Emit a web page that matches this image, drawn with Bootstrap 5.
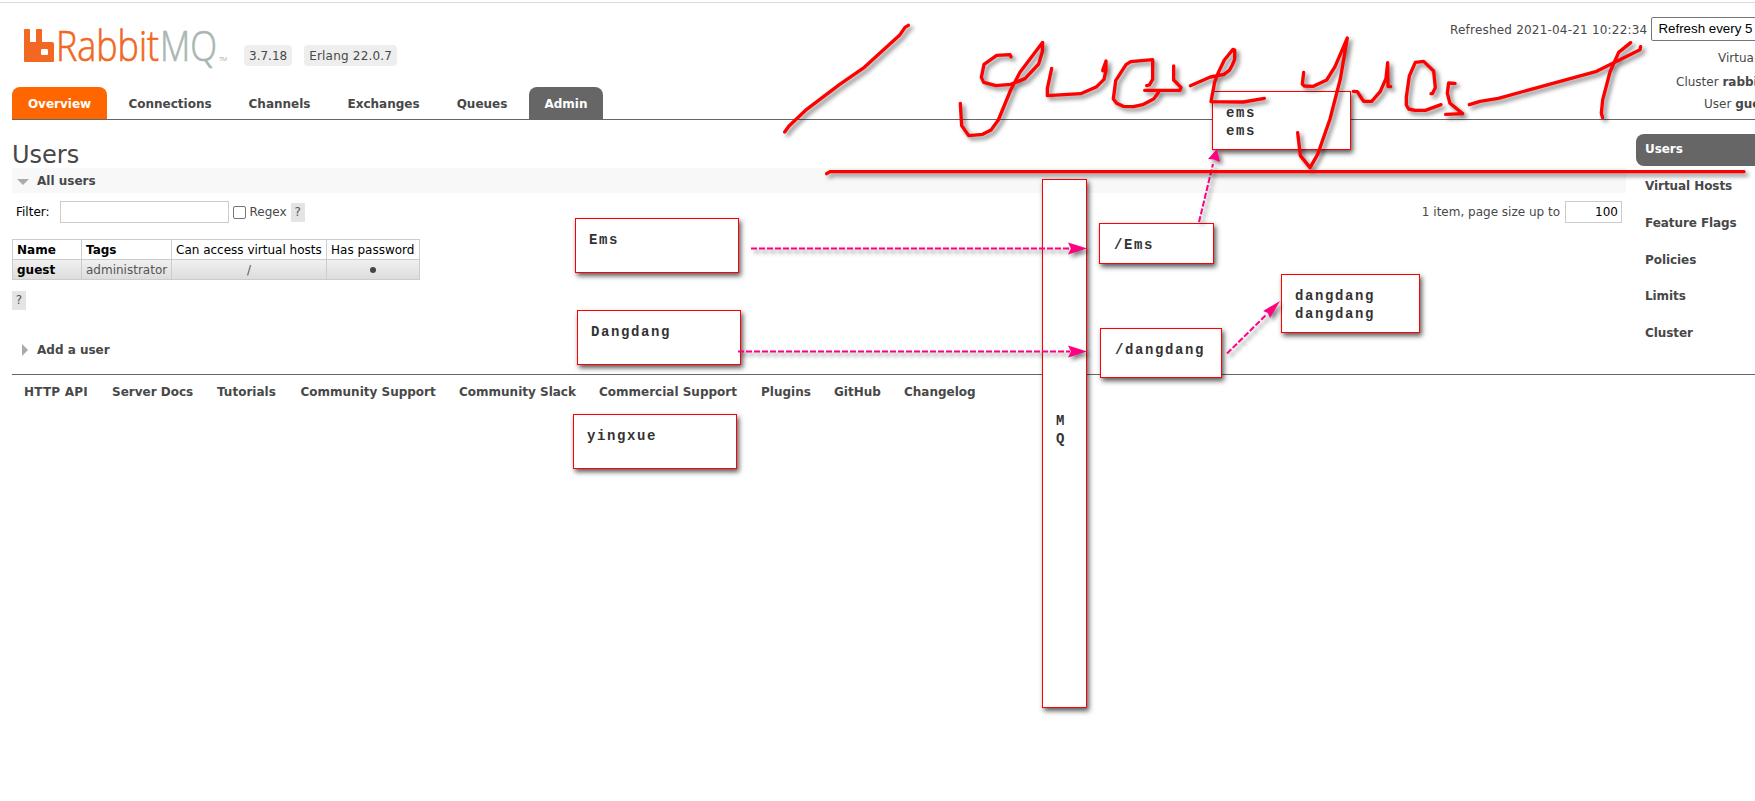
<!DOCTYPE html>
<html lang="en">
<head>
<meta charset="utf-8">
<title>RabbitMQ Management</title>
<link rel="stylesheet" href="https://cdn.jsdelivr.net/npm/bootstrap@5.3.0/dist/css/bootstrap.min.css">
<style>
body{font:12px/17px "DejaVu Sans",Verdana,sans-serif;color:#484848;background:#fff;height:801px;overflow:hidden;position:relative}
b,.fw-bold,th{font-weight:700}
.topline{height:1px;margin-top:2px;background:#dadada}
.masthead{height:84px;padding-left:24px}
.logo{margin-top:22px;width:206px;height:42px;overflow:visible}
.ver{background:#eee;border-radius:4px;height:21px;line-height:22px;margin-top:42px;padding:0 5px;white-space:nowrap}
.ver+.ver{letter-spacing:.2px}
.status{margin-left:auto;width:305px;height:84px;white-space:nowrap}
.refresh{margin-top:13px;height:26px}
.refresh>span:first-child{letter-spacing:.2px;padding-top:2px}
.picker{border:1px solid #767676;border-radius:2px;width:180px;height:24px;font:13.33px/22px "Liberation Sans",sans-serif;color:#000;padding-left:6px;margin-left:4px;flex:none}
.tabs{height:33px;margin-left:12px;border-bottom:1px solid #666}
.tabs a{height:32px;line-height:34px;color:#444;font-weight:700;border-radius:8px 8px 0 0;text-decoration:none;text-align:center}
.tabs a.hot{background:#f60;color:#fff}.tabs a.sel{background:#666;color:#fff}
.mainpane{width:1614px;margin-left:12px;height:254px}
h1{font-size:24px;line-height:30px;font-weight:400;margin:20px 0 0;height:28px;color:#484848}
.sect{height:25px;line-height:23px;font-weight:700;padding:2px 0 0 5px}
.sect svg{width:12px;height:12px;margin-right:8px;flex:none}
.sect.open{background:#f8f8f8}
.inp{border:1px solid #ccc;height:22px;display:block;color:#000}
.chk{width:13px;height:13px;border:1px solid #767676;border-radius:2px}
.help{background:#e4e4e4;width:14px;height:19px;line-height:19px;text-align:center;color:#555}
.utable{border-collapse:collapse;margin-top:16px;width:407px;table-layout:fixed}
.utable td,.utable th{border:1px solid #ccc;padding:0 4px;height:20px;line-height:18px;white-space:nowrap;color:#000}
.utable tbody tr{background:linear-gradient(#f0f0f0,#dcdcdc)}
.utable tbody td{color:#555}.utable tbody td.nm{color:#000}
.utable .dot{width:6px;height:6px;border-radius:50%;background:#444;display:inline-block;vertical-align:1px}
.side{width:119px;margin-left:10px;padding-top:14px}
.side a{display:block;height:36.8px;line-height:30px;padding-left:9px;font-weight:700;color:#444;text-decoration:none;letter-spacing:-.07px}
.side a.sel{background:#666;color:#fff;border-radius:8px 0 0 8px;height:32px;line-height:31px;margin-bottom:5px}
.foot{margin-left:12px;border-top:1px solid #666;padding:9px 0 0 12px}
.foot a{color:#444;font-weight:700;text-decoration:none;white-space:nowrap;flex:none}
.note{position:absolute;background:#fff;border:1px solid #f00;box-shadow:2px 3px 5px rgba(0,0,0,.65);font:700 14px/18px "Liberation Mono",monospace;letter-spacing:1.6px;color:#333;padding:12px 0 0 13px;white-space:pre}
.ink{position:absolute;left:0;top:0;pointer-events:none}
.ink>g{filter:drop-shadow(3px 3px 2px rgba(0,0,0,.5))}
</style>
<script src="https://cdn.jsdelivr.net/npm/bootstrap@5.3.0/dist/js/bootstrap.bundle.min.js"></script>
</head>
<body>
<div class="topline"></div>
<header class="masthead d-flex align-items-start">
<svg class="logo" viewBox="24 25 206 42"><path d="M24 30q0-1 1-1h4q1 0 1 1v12h6V30q0-1 1-1h4q1 0 1 1v12h10q2 0 2 2v17q0 1-1 1H25q-1 0-1-1zM41 51v3q0 1 1 1h5q1 0 1-1v-3q0-2-1-2h-5q-1 0-1 2z" fill="#f26722"/>
<text x="56" y="61" font-family="Open Sans" font-weight="300" font-size="43" fill="#f26722" stroke="#f26722" stroke-width=".7" textLength="103" lengthAdjust="spacingAndGlyphs">Rabbit</text>
<text x="160" y="61" font-family="Open Sans" font-weight="300" font-size="43" fill="#a9b7b1" stroke="#a9b7b1" stroke-width=".7" textLength="57" lengthAdjust="spacingAndGlyphs">MQ</text>
<text x="219" y="61" font-family="Liberation Sans" font-size="6" fill="#a9b7b1" textLength="8">TM</text></svg>
<span class="ver" style="margin-left:14px">3.7.18</span><span class="ver" style="margin-left:12px">Erlang 22.0.7</span>
<div class="status"><div class="refresh d-flex align-items-center"><span>Refreshed 2021-04-21 10:22:34</span><span class="picker">Refresh every 5 seconds</span></div>
<div style="margin:8px 0 0 268px">Virtual host</div><div style="margin:7px 0 0 226px">Cluster <b>rabbit@localhost</b></div><div style="margin:5px 0 0 254px">User <b>guest</b></div></div>
</header>
<nav class="tabs d-flex"><a class="hot" style="width:95px">Overview</a><a style="width:126px">Connections</a><a style="width:93px">Channels</a><a style="width:115px">Exchanges</a><a style="width:82px">Queues</a><a class="sel" style="width:74px;margin-left:6px">Admin</a></nav>
<div class="d-flex">
<main class="mainpane">
<h1>Users</h1>
<div class="sect open d-flex align-items-center"><svg viewBox="0 0 12 12"><path d="M0 3h12L6 9z" fill="#aaa"/></svg>All users</div>
<div class="d-flex align-items-center" style="margin-top:8px;height:22px;padding:0 4px"><span class="text-black" style="padding-top:1px">Filter:</span><span class="inp" style="width:169px;margin-left:10px"></span><span class="chk" style="margin-left:4px"></span><span style="margin-left:4px">Regex</span><span class="help" style="margin-left:4px">?</span><span class="ms-auto" style="padding-top:1px">1 item, page size up to</span><span class="inp text-end" style="width:57px;margin-left:5px;padding:2px 3px">100</span></div>
<table class="utable"><colgroup><col style="width:69px"><col style="width:90px"><col style="width:155px"><col style="width:93px"></colgroup><thead><tr><th>Name</th><th>Tags</th><td>Can access virtual hosts</td><td>Has password</td></tr></thead>
<tbody><tr><td class="nm"><b>guest</b></td><td>administrator</td><td class="text-center">/</td><td class="text-center"><span class="dot"></span></td></tr></tbody></table>
<div class="help" style="margin-top:11px">?</div>
<div class="sect d-flex align-items-center" style="margin-top:27px"><svg viewBox="0 0 12 12" style="margin-top:-2px"><path d="M5 0l6 6-6 6z" fill="#aaa"/></svg>Add a user</div>
</main>
<aside class="side"><a class="sel">Users</a><a>Virtual Hosts</a><a>Feature Flags</a><a>Policies</a><a>Limits</a><a>Cluster</a></aside>
</div>
<footer class="foot d-flex"><a style="width:88px;letter-spacing:.2px">HTTP API</a><a style="width:105px">Server Docs</a><a style="width:83.5px">Tutorials</a><a style="width:158.5px">Community Support</a><a style="width:140px">Community Slack</a><a style="width:162px">Commercial Support</a><a style="width:73px">Plugins</a><a style="width:70px">GitHub</a><a>Changelog</a></footer>

<div class="note" style="left:575px;top:218px;width:164px;height:55px">Ems</div>
<div class="note" style="left:577px;top:310px;width:164px;height:55px">Dangdang</div>
<div class="note" style="left:573px;top:414px;width:164px;height:55px">yingxue</div>
<div class="note" style="left:1042px;top:179px;width:45px;height:532px;padding-top:232px;padding-left:13px;height:529px">M
Q</div>
<div class="note" style="left:1212px;top:91px;width:139px;height:59px">ems
ems</div>
<div class="note" style="left:1099px;top:223px;width:115px;height:41px;padding-left:14px">/Ems</div>
<div class="note" style="left:1100px;top:328px;width:122px;height:50px;padding-left:14px">/dangdang</div>
<div class="note" style="left:1281px;top:274px;width:139px;height:59px">dangdang
dangdang</div>
<svg class="ink" width="1755" height="801" viewBox="0 0 1755 801" fill="none">
<g stroke="#ff0080" stroke-width="2" stroke-dasharray="6 2"><path d="M751 248.500H1070M738 351.500H1070M1199 222L1213 164M1227 353.500L1266 315"/></g>
<g fill="#ff0080"><path d="M1087 248.500L1068 242.500L1071 248.500L1068 254.500zM1087 351.500L1068 345.500L1071 351.500L1068 357.500zM1217 149L1208 159L1214 159.500L1220 162zM1280 301L1263 311L1268 313L1270 318z"/></g>
<g stroke="#f00" stroke-width="10" stroke-linecap="round" stroke-linejoin="round">
<g transform="translate(770 10) scale(.33333)">
<polyline points="415,46 405,52 390,74 283,172 208,224 110,298 57,348 44,366"/>
<polyline points="723,140 720,134 680,136 642,163 634,202 641,217 678,227 722,223 765,206 806,162 817,125 818,97 750,187 722,240 685,330 663,360 638,373 596,377 575,347 571,280"/>
<polyline points="845,175 832,236 832,257 932,251 980,230 1002,208 1008,180 1008,153 998,182"/>
<polyline points="1130,227 1138,225 1148,208 1148,149 1082,155 1068,164 1037,212 1030,267 1040,280 1060,289 1090,290 1118,284 1152,266 1166,246"/>
<polyline points="1124,241 1230,241 1233,232 1211,210 1211,168"/>
<polyline points="170,491 180,485 2922,485"/>
</g>
<g transform="translate(1160 10) scale(.33333)">
<polyline points="91,227 151,201 192,193 208,181 217,165 224,148 224,120 219,118 193,150 174,190 164,216 153,275 250,276 313,265"/>
<polyline points="431,187 427,222 433,228 460,229 500,210 525,170 562,84 541,207 510,327 473,433 450,473 421,437 413,368"/>
<polyline points="580,244 592,245 606,267 611,274 635,274 661,244 678,205 683,158 684,229 692,230"/>
</g>
<g transform="scale(.33333) translate(4200 0)">
<polyline points="93,281 97,281 106,263 101,213 71,184 46,187 28,228 19,291 19,315 26,327 45,331 76,331 123,314"/>
<polyline points="165,250 146,249 142,280 150,310 188,341 137,343"/>
<polyline points="208,314 240,304 295,295 590,214 720,149 722,140"/>
<polyline points="692,128 656,157 630,216 608,300 604,340 608,353"/>
</g></g></svg>
</body>
</html>
